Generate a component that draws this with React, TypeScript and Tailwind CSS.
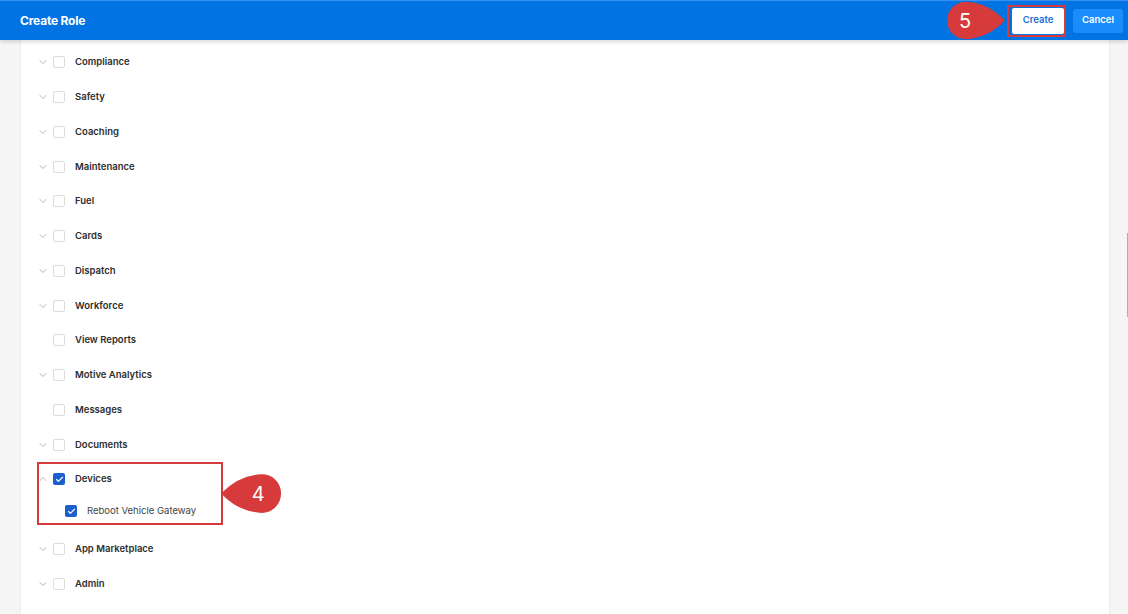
import React from 'react'
import { ChevronDown, ChevronUp, Check } from 'lucide-react'

const ROWS: { label: string; chevron: boolean }[] = [
  { label: 'Compliance', chevron: true },
  { label: 'Safety', chevron: true },
  { label: 'Coaching', chevron: true },
  { label: 'Maintenance', chevron: true },
  { label: 'Fuel', chevron: true },
  { label: 'Cards', chevron: true },
  { label: 'Dispatch', chevron: true },
  { label: 'Workforce', chevron: true },
  { label: 'View Reports', chevron: false },
  { label: 'Motive Analytics', chevron: true },
  { label: 'Messages', chevron: false },
  { label: 'Documents', chevron: true },
]

function Box({ checked }: { checked?: boolean }) {
  if (checked) {
    return (
      <span className="w-[12px] h-[12px] rounded-[2px] bg-[#1b5fcf] flex items-center justify-center">
        <Check className="w-[9px] h-[9px] text-white" strokeWidth={3} />
      </span>
    )
  }
  return <span className="w-[12px] h-[12px] rounded-[2px] border border-[#dcdcdc] bg-white" />
}

function Row({ label, chevron, open, checked }: { label: string; chevron: boolean; open?: boolean; checked?: boolean }) {
  return (
    <div className="h-[34.75px] flex items-center">
      <span className="w-[12px] flex justify-center mr-[4px]">
        {chevron && (open
          ? <ChevronUp className="w-[12px] h-[12px] text-[#9c9c9c]" strokeWidth={1.5} />
          : <ChevronDown className="w-[12px] h-[12px] text-[#9c9c9c]" strokeWidth={1.5} />)}
      </span>
      <Box checked={checked} />
      <span className="ml-[10px] text-[9.5px] font-semibold text-[#2e2e2e]">{label}</span>
    </div>
  )
}

// teardrop marker; circle on one side, point on the other
function Callout({ n, point, className }: { n: string; point: 'left' | 'right'; className: string }) {
  return (
    <div className={`absolute ${className}`}>
      <svg viewBox="0 0 64 44" className={`w-full h-full ${point === 'left' ? '-scale-x-100' : ''}`}>
        <path d="M64 22 Q46 3 22 2 A20 20 0 1 0 22 42 Q46 41 64 22 Z" fill="#d63a3a" />
      </svg>
      <span className={`absolute top-0 h-full flex items-center justify-center text-white text-[20px] ${point === 'left' ? 'left-[20%] right-0' : 'left-0 w-[69%]'}`}>
        {n}
      </span>
    </div>
  )
}

export default function App() {
  return (
    <div className="w-[1128px] h-[614px] bg-[#f5f5f5] relative overflow-hidden" style={{ fontFamily: 'Inter, "Noto Sans", sans-serif' }}>
      <header className="h-[40px] bg-[#0273e3] border-t border-[#3b8ff0] flex items-center justify-between pl-[20px] pr-[5px] relative z-10 shadow-[0_2px_4px_rgba(0,0,0,0.15)]">
        <h1 className="text-white font-bold text-[12px] tracking-[-0.2px]">Create Role</h1>
        <div className="flex items-center gap-[9px]">
          <button className="h-[26px] w-[52px] bg-white text-[#1a6fd6] text-[9.5px] font-semibold rounded-[2px]">Create</button>
          <button className="h-[24px] w-[50px] bg-[#1a8cfb] text-white text-[9.5px] font-semibold rounded-[3px]">Cancel</button>
        </div>
      </header>

      <div className="mx-[20px] w-[1090px] h-[574px] bg-white border-x border-[#ececec] pl-[16px] pt-[5px] relative">
        {ROWS.map(r => <Row key={r.label} label={r.label} chevron={r.chevron} />)}
        <Row label="Devices" chevron open checked />
        <div className="h-[29px] mb-[6px] flex items-center pl-[28px]">
          <Box checked />
          <span className="ml-[10px] text-[9.5px] text-[#444]">Reboot Vehicle Gateway</span>
        </div>
        <Row label="App Marketplace" chevron />
        <Row label="Admin" chevron />

        <div className="absolute left-[16px] top-[422px] w-[186px] h-[63px] border-2 border-[#d63a3a]" />
        <Callout n="4" point="left" className="left-[200px] top-[432px] w-[62px] h-[43px]" />
      </div>

      <div className="absolute left-[1007px] top-[5px] w-[59px] h-[32px] border-2 border-[#d63a3a] z-20" />
      <Callout n="5" point="right" className="left-[943px] top-[0px] w-[64px] h-[41px] z-20" />
      <div className="absolute left-[1127px] top-[233px] w-[1px] h-[84px] bg-[#9fb0c8]" />
    </div>
  )
}
